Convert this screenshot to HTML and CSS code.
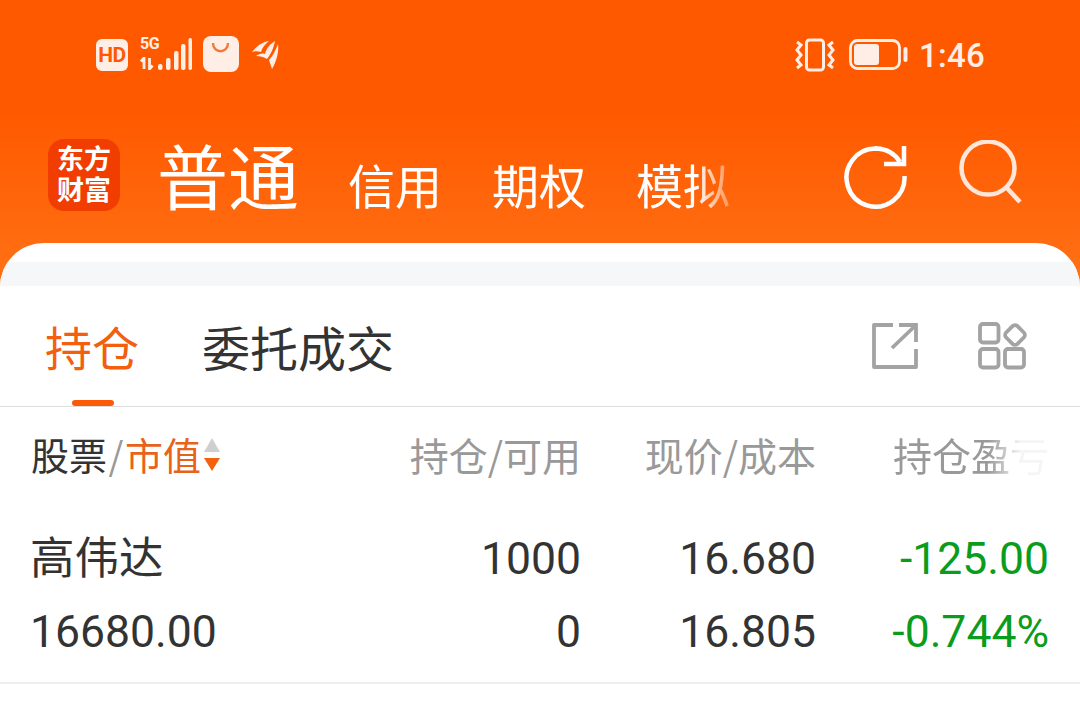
FILE: index.html
```html
<!DOCTYPE html>
<html lang="zh-CN">
<head>
    <meta charset="UTF-8">
    <meta name="viewport" content="width=device-width, initial-scale=1.0">
    <title>持仓</title>
    <link rel="stylesheet" href="styles.css">
</head>
<body>
    <div class="screen">
        <!-- 状态栏 -->
        <div class="status-bar">
            <div class="status-left">
                <span class="hd-badge">HD</span>
                <div class="signal">
                    <div class="signal-text">
                        <span class="five-g">5G</span>
                        <svg class="data-arrows" width="18" height="13" viewBox="0 0 18 13">
                            <path d="M4 12V1L1 4.500M9.500 1v11l3-3.500" fill="none" stroke="#ffeee5" stroke-width="2.800"/>
                        </svg>
                    </div>
                    <svg class="signal-bars" width="34" height="32" viewBox="0 0 34 32">
                        <rect x="0" y="26" width="4.500" height="6" rx="2" fill="#ffeee5"/>
                        <rect x="8" y="20" width="4.500" height="12" rx="2" fill="#ffeee5"/>
                        <rect x="16" y="13" width="4.500" height="19" rx="2" fill="#ffeee5"/>
                        <rect x="23" y="6" width="4.500" height="26" rx="2" fill="#ffeee5"/>
                        <rect x="30.500" y="0" width="3.500" height="32" rx="1.700" fill="#ffeee5"/>
                    </svg>
                </div>
                <svg class="bag" width="36" height="36" viewBox="0 0 36 36">
                    <rect width="36" height="36" rx="8" fill="#ffeee5"/>
                    <path d="M10 7c0 11 15 11 15 0" fill="none" stroke="#f07a3a" stroke-width="2.400"/>
                </svg>
                <svg class="feather" width="27" height="29" viewBox="0 0 27 29">
                    <path d="M0 12C5 6 10 2 17 1 13 4 10 8 9 12 6 11 3 11 0 12z" fill="#ffeee5"/>
                    <path d="M4 16C7 14 10 13 13 14 14 9 18 4 23 1 22 6 20 13 15 19 12 17 8 16 4 16z" fill="#ffeee5"/>
                    <path d="M17 20C21 16 24 9 26 4 27 11 25 20 20 29 19 26 18 23 17 20z" fill="#ffeee5"/>
                </svg>
            </div>
            <div class="status-right">
                <svg class="vibrate" width="42" height="34" viewBox="0 0 42 34">
                    <rect x="12.500" y="2" width="17" height="30" rx="3" fill="none" stroke="#ffeee5" stroke-width="3"/>
                    <path d="M3 4l4 3-4 5 4 5-4 5 4 5-4 3M39 4l-4 3 4 5-4 5 4 5-4 5 4 3" fill="none" stroke="#ffeee5" stroke-width="3"/>
                </svg>
                <svg class="battery" width="59" height="32" viewBox="0 0 59 32">
                    <rect x="1.500" y="1.500" width="49" height="28" rx="7" fill="none" stroke="#ffeee5" stroke-width="2.800"/>
                    <rect x="5" y="5" width="25" height="21" rx="3" fill="#ffeee5"/>
                    <rect x="54.500" y="8" width="4" height="15" rx="2" fill="#ffeee5"/>
                </svg>
                <span class="clock">1:46</span>
            </div>
        </div>

        <!-- 顶部导航 -->
        <div class="top-nav">
            <div class="logo">东方<br>财富</div>
            <div class="account-tabs">
                <span class="account-active">普通</span>
                <span class="account-tab">信用</span>
                <span class="account-tab">期权</span>
                <span class="account-tab">模拟</span>
            </div>
            <svg class="refresh" width="66" height="66" viewBox="0 0 66 66">
                <path d="M61.500 32A29 29 0 1 1 57 18C52 10 43 4.500 32 4.500" fill="none" stroke="#fff" stroke-width="4.500"/>
                <path d="M61 2v18H41" fill="none" stroke="#fff" stroke-width="4.500"/>
            </svg>
            <svg class="search" width="66" height="66" viewBox="0 0 66 66">
                <circle cx="30" cy="28" r="26.500" fill="none" stroke="#ffe6d8" stroke-width="4.500"/>
                <path d="M48 47l14 15" fill="none" stroke="#ffe6d8" stroke-width="4.500"/>
            </svg>
        </div>

        <!-- 持仓卡片 -->
        <div class="card">
            <div class="card-band"></div>
            <div class="tab-row">
                <span class="tab tab-active">持仓</span>
                <span class="tab">委托成交</span>
                <div class="tab-tools">
                    <svg width="46" height="46" viewBox="0 0 46 46">
                        <path d="M21 2H2v42h42V26" fill="none" stroke="#a3a3a3" stroke-width="3.800" stroke-linejoin="round"/>
                        <path d="M27 2h17v17M44 2L20 25" fill="none" stroke="#a3a3a3" stroke-width="3.800"/>
                    </svg>
                    <svg width="50" height="48" viewBox="0 0 50 48">
                        <rect x="2" y="2" width="18.500" height="18.500" rx="3" fill="none" stroke="#a3a3a3" stroke-width="3.800"/>
                        <rect x="2" y="27" width="18.500" height="18.500" rx="3" fill="none" stroke="#a3a3a3" stroke-width="3.800"/>
                        <rect x="27" y="27" width="19" height="18.500" rx="3" fill="none" stroke="#a3a3a3" stroke-width="3.800"/>
                        <rect x="29" y="5" width="16" height="16" rx="3.500" transform="rotate(45 37 13)" fill="none" stroke="#a3a3a3" stroke-width="3.800"/>
                    </svg>
                </div>
            </div>

            <div class="grid-row head-row">
                <div class="head-name">
                    股票<em>/</em><span class="sort-key">市值</span>
                    <span class="sort-arrows"><i class="arrow-up"></i><i class="arrow-down"></i></span>
                </div>
                <div>持仓/可用</div>
                <div>现价/成本</div>
                <div class="head-last">持仓盈亏</div>
            </div>

            <div class="stock-row">
                <div class="grid-row">
                    <div class="stock-name">高伟达</div>
                    <div>1000</div>
                    <div>16.680</div>
                    <div class="loss">-125.00</div>
                </div>
                <div class="grid-row">
                    <div class="stock-name">16680.00</div>
                    <div>0</div>
                    <div>16.805</div>
                    <div class="loss">-0.744%</div>
                </div>
            </div>
        </div>
    </div>
</body>
</html>
```

FILE: styles.css
```css
* {
    margin: 0;
    padding: 0;
    box-sizing: border-box;
}
html, body {
    height: 100%;
    overflow: hidden;
}
body {
    background: #fff;
    font-family: Roboto, "Noto Sans CJK SC", sans-serif;
}
.screen {
    height: 719px;
    overflow: hidden;
    background: linear-gradient(180deg, #ff5900 0, #ff5900 110px, #ff7216 290px);
}

/* 状态栏 */
.status-bar {
    height: 110px;
    padding: 36px 96px 0;
    display: flex;
    justify-content: space-between;
    align-items: flex-start;
}
.status-left {
    display: flex;
    align-items: flex-start;
}
.hd-badge {
    width: 32px;
    height: 32px;
    margin-top: 3px;
    background: #ffeee5;
    border-radius: 6px;
    color: #ff5900;
    font-size: 21px;
    font-weight: 700;
    line-height: 32px;
    text-align: center;
    letter-spacing: -0.5px;
}
.signal {
    display: flex;
    align-items: flex-end;
    margin-left: 12px;
    height: 34px;
}
.signal-text {
    width: 18px;
    display: flex;
    flex-direction: column;
    justify-content: space-between;
    height: 34px;
}
.five-g {
    color: #ffeee5;
    font-size: 16px;
    font-weight: 700;
    line-height: 15px;
    letter-spacing: -0.5px;
}
.data-arrows {
    display: block;
}
.signal-bars {
    display: block;
}
.bag {
    margin-left: 11px;
}
.feather {
    margin: 4px 0 0 13px;
}
.status-right {
    display: flex;
    align-items: center;
    height: 36px;
    margin-top: 1px;
}
.vibrate {
    margin-right: 13px;
}
.battery {
    margin-right: 11px;
}
.clock {
    color: #ffeee5;
    font-size: 33px;
    font-weight: 500;
    width: 65px;
    letter-spacing: 0.3px;
}

/* 顶部导航 */
.top-nav {
    height: 133px;
    padding: 0 0 0 48px;
    display: flex;
    align-items: flex-start;
}
.logo {
    width: 72px;
    height: 72px;
    margin-top: 29px;
    background: #f23d00;
    border-radius: 16px;
    color: #fff;
    font-family: "Noto Sans CJK SC", sans-serif;
    font-size: 27px;
    font-weight: 700;
    line-height: 31px;
    text-align: center;
    padding-top: 3px;
}
.account-tabs {
    width: 590px;
    margin-left: 37px;
    height: 126px;
    display: flex;
    align-items: baseline;
    gap: 50px;
    font-family: "Noto Sans CJK SC", sans-serif;
    color: #fff;
    line-height: 126px;
    -webkit-mask-image: linear-gradient(90deg, #000 538px, rgba(0, 0, 0, 0.2) 578px);
    mask-image: linear-gradient(90deg, #000 538px, rgba(0, 0, 0, 0.2) 578px);
}
.account-active {
    font-size: 71px;
    margin-right: -1px;
}
.account-tab {
    font-size: 47px;
}
.refresh {
    margin: 34px 0 0 96px;
}
.search {
    margin: 30px 0 0 49px;
}

/* 持仓卡片 */
.card {
    background: #fff;
    border-radius: 44px 44px 0 0;
    height: 476px;
    padding-top: 19px;
    overflow: hidden;
}
.card-band {
    height: 24px;
    background: #f6f7f9;
}
.tab-row {
    height: 121px;
    padding: 0 52px 0 45px;
    border-bottom: 1px solid #dedede;
    display: flex;
    align-items: center;
    gap: 63px;
}
.tab {
    font-family: "Noto Sans CJK SC", sans-serif;
    font-size: 48px;
    color: #333;
    position: relative;
    line-height: 120px;
    height: 120px;
}
.tab-active {
    color: #f2600f;
    font-size: 47px;
    width: 94px;
}
.tab-active::after {
    content: "";
    position: absolute;
    left: 27px;
    bottom: 0;
    width: 42px;
    height: 6px;
    border-radius: 3px;
    background: #fb5a08;
}
.tab-tools {
    margin-left: auto;
    display: flex;
    align-items: center;
    gap: 60px;
}
.grid-row {
    display: grid;
    grid-template-columns: 300px 250px 235px 233px;
    padding: 0 31px;
    text-align: right;
    color: #333;
    font-size: 44.500px;
}
.head-row {
    height: 103px;
    padding-top: 22px;
    font-family: "Noto Sans CJK SC", sans-serif;
    font-size: 39px;
    line-height: 50px;
    color: #999;
    align-items: start;
}
.head-name {
    text-align: left;
    color: #333;
    font-size: 38px;
    display: flex;
    align-items: center;
}
.head-name em {
    font-style: normal;
    color: #999;
    margin: 0 1.500px;
}
.sort-key {
    color: #e8631a;
}
.sort-arrows {
    display: flex;
    flex-direction: column;
    gap: 6px;
    margin-left: 3px;
}
.sort-arrows i {
    display: block;
    width: 0;
    height: 0;
    border-left: 8.500px solid transparent;
    border-right: 8.500px solid transparent;
}
.arrow-up {
    border-bottom: 14px solid #cfcfcf;
}
.arrow-down {
    border-top: 13px solid #f5620f;
}
.head-last {
    -webkit-mask-image: linear-gradient(90deg, #000 172px, rgba(0, 0, 0, 0.1) 205px);
    mask-image: linear-gradient(90deg, #000 172px, rgba(0, 0, 0, 0.1) 205px);
}
.stock-row {
    height: 174px;
    padding-top: 23px;
    border-bottom: 2px solid #eee;
    display: flex;
    flex-direction: column;
    gap: 21px;
}
.stock-row .grid-row {
    line-height: 52px;
    padding-right: 30px;
}
.stock-name {
    text-align: left;
    margin-left: -1px;
}
.loss {
    color: #0a9c1c;
}
```
